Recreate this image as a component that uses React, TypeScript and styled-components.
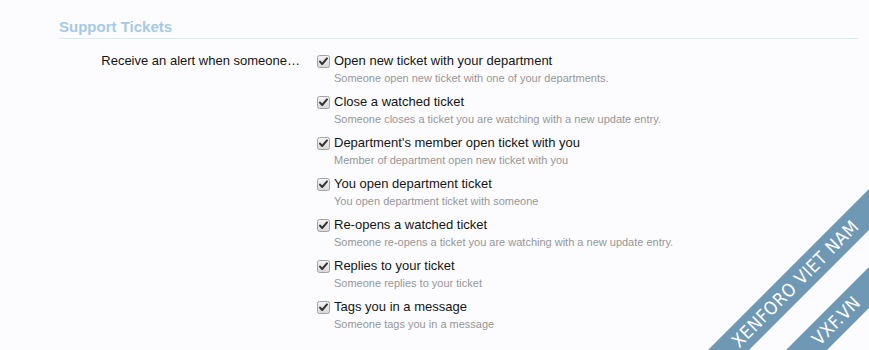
import React from "react";
import styled, { createGlobalStyle } from "styled-components";

const GlobalStyle = createGlobalStyle`
  html, body {
    margin: 0;
    padding: 0;
    background: #fcfcff;
  }
  body {
    font-family: "Liberation Sans", Arial, sans-serif;
    color: #141414;
  }
`;

interface AlertOption {
  label: string;
  hint: string;
}

const options: AlertOption[] = [
  {
    label: "Open new ticket with your department",
    hint: "Someone open new ticket with one of your departments.",
  },
  {
    label: "Close a watched ticket",
    hint: "Someone closes a ticket you are watching with a new update entry.",
  },
  {
    label: "Department's member open ticket with you",
    hint: "Member of department open new ticket with you",
  },
  {
    label: "You open department ticket",
    hint: "You open department ticket with someone",
  },
  {
    label: "Re-opens a watched ticket",
    hint: "Someone re-opens a ticket you are watching with a new update entry.",
  },
  {
    label: "Replies to your ticket",
    hint: "Someone replies to your ticket",
  },
  {
    label: "Tags you in a message",
    hint: "Someone tags you in a message",
  },
];

const Page = styled.div`
  position: relative;
  width: 869px;
  height: 350px;
  overflow: hidden;
  padding: 18px 11px 0 59px;
  box-sizing: border-box;
`;

const Heading = styled.h3`
  margin: 0 0 13px;
  padding-bottom: 2px;
  font-size: 15px;
  line-height: 18px;
  font-weight: bold;
  color: #a5cae4;
  border-bottom: 1px solid #d7edfc;
`;

const CtrlUnit = styled.div`
  display: grid;
  grid-template-columns: 241px 1fr;
  column-gap: 17px;
`;

const UnitLabel = styled.div`
  text-align: right;
  font-size: 13px;
  line-height: 18px;
`;

const OptionList = styled.ul`
  list-style: none;
  margin: 0;
  padding: 0;
  display: flex;
  flex-direction: column;
  gap: 7px;
`;

const OptionItem = styled.li`
  display: flex;
  flex-direction: column;
`;

const OptionLine = styled.label`
  display: flex;
  align-items: center;
  gap: 4px;
  font-size: 13px;
  line-height: 18px;
`;

const Hint = styled.div`
  padding-left: 17px;
  font-size: 11px;
  line-height: 16px;
  color: #969696;
`;

const CheckBox = () => (
  <svg width="13" height="13" viewBox="0 0 13 13" aria-hidden="true">
    <defs>
      <linearGradient id="cbFill" x1="0" y1="0" x2="0" y2="1">
        <stop offset="0" stopColor="#f4f4f4" />
        <stop offset="1" stopColor="#d8d8d8" />
      </linearGradient>
    </defs>
    <rect
      x="0.5"
      y="0.5"
      width="12"
      height="12"
      rx="2"
      fill="url(#cbFill)"
      stroke="#a3a3a3"
    />
    <path
      d="M3 6.6 L5.2 9 L10 3.4"
      fill="none"
      stroke="#333"
      strokeWidth="2"
      strokeLinecap="round"
      strokeLinejoin="round"
    />
  </svg>
);

const Ribbon = styled.div`
  position: absolute;
  inset: 0;
  pointer-events: none;
  overflow: hidden;
`;

const Band = styled.div<{ $cx: number; $cy: number }>`
  position: absolute;
  left: ${({ $cx }) => $cx - 200}px;
  top: ${({ $cy }) => $cy - 14.5}px;
  width: 400px;
  height: 29px;
  background: #6f98b5;
  color: #fff;
  transform: rotate(-45deg);
  display: flex;
  align-items: center;
  justify-content: center;
  font-family: "DejaVu Sans Condensed", "DejaVu Sans", sans-serif;
  font-stretch: condensed;
  font-size: 18px;
  letter-spacing: 0.5px;
  text-transform: uppercase;
`;

const App: React.FC = () => (
  <Page>
    <GlobalStyle />
    <Heading>Support Tickets</Heading>
    <CtrlUnit>
      <UnitLabel>Receive an alert when someone…</UnitLabel>
      <OptionList>
        {options.map((option) => (
          <OptionItem key={option.label}>
            <OptionLine>
              <CheckBox />
              {option.label}
            </OptionLine>
            <Hint>{option.hint}</Hint>
          </OptionItem>
        ))}
      </OptionList>
    </CtrlUnit>
    <Ribbon>
      <Band $cx={795} $cy={283}>
        XenForo Viet Nam
      </Band>
      <Band $cx={836} $cy={320}>
        VXF.VN
      </Band>
    </Ribbon>
  </Page>
);

export default App;
